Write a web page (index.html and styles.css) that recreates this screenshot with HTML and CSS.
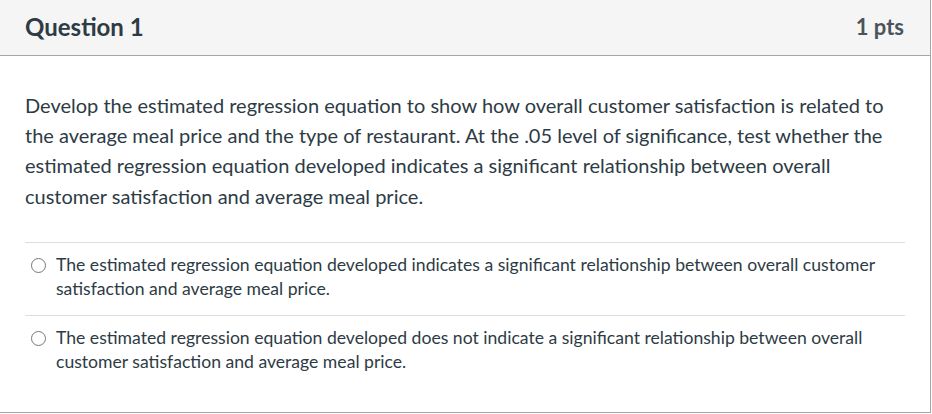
FILE: index.html
```html
<!DOCTYPE html>
<html>
<head>
<meta charset="utf-8">
<link rel="stylesheet" href="styles.css">
</head>
<body>
<div class="question">
  <div class="header">
    <span class="title">Question 1</span>
    <span class="pts">1 pts</span>
  </div>
  <div class="content">
    <p class="text">Develop the estimated regression equation to show how overall customer satisfaction is related to the average meal price and the type of restaurant. At the .05 level of significance, test whether the estimated regression equation developed indicates a significant relationship between overall customer satisfaction and average meal price.</p>
    <div class="answers">
      <div class="answer">
        <span class="radio"></span>
        <span class="label">The estimated regression equation developed indicates a significant relationship between overall customer satisfaction and average meal price.</span>
      </div>
      <div class="answer">
        <span class="radio"></span>
        <span class="label">The estimated regression equation developed does not indicate a significant relationship between overall customer satisfaction and average meal price.</span>
      </div>
    </div>
  </div>
</div>
</body>
</html>
```

FILE: styles.css
```css
html, body {
  margin: 0;
  padding: 0;
  background: #fff;
}
body {
  font-family: Lato, "Liberation Sans", sans-serif;
  color: #2d3b45;
}
.question {
  width: 932px;
  height: 414px;
  margin-left: -1px;
  margin-top: -1px;
  border: 1px solid #a5a5a5;
  border-left: none;
  box-sizing: border-box;
}
.header {
  display: flex;
  justify-content: space-between;
  align-items: center;
  height: 56px;
  box-sizing: border-box;
  background: #f5f5f5;
  border-bottom: 1px solid #a5a5a5;
  padding: 0 26px 2px 26px;
}
.title {
  font-size: 24px;
  font-weight: 700;
}
.pts {
  font-size: 22px;
  font-weight: 700;
  color: #4a545c;
}
.content {
  padding: 34px 0 0 26px;
}
.text {
  margin: 0;
  font-size: 20px;
  line-height: 30.2px;
  width: 872px;
}
.answers {
  margin-top: 31px;
  width: 880px;
}
.answer {
  display: flex;
  align-items: flex-start;
  border-top: 1px solid #dddddd;
  padding: 10px 0 14px 6px;
}
.radio {
  flex: none;
  width: 13px;
  height: 13px;
  border: 1px solid #777;
  border-radius: 50%;
  margin-top: 5px;
  margin-right: 10px;
}
.label {
  font-size: 17.6px;
  line-height: 24px;
}
```
